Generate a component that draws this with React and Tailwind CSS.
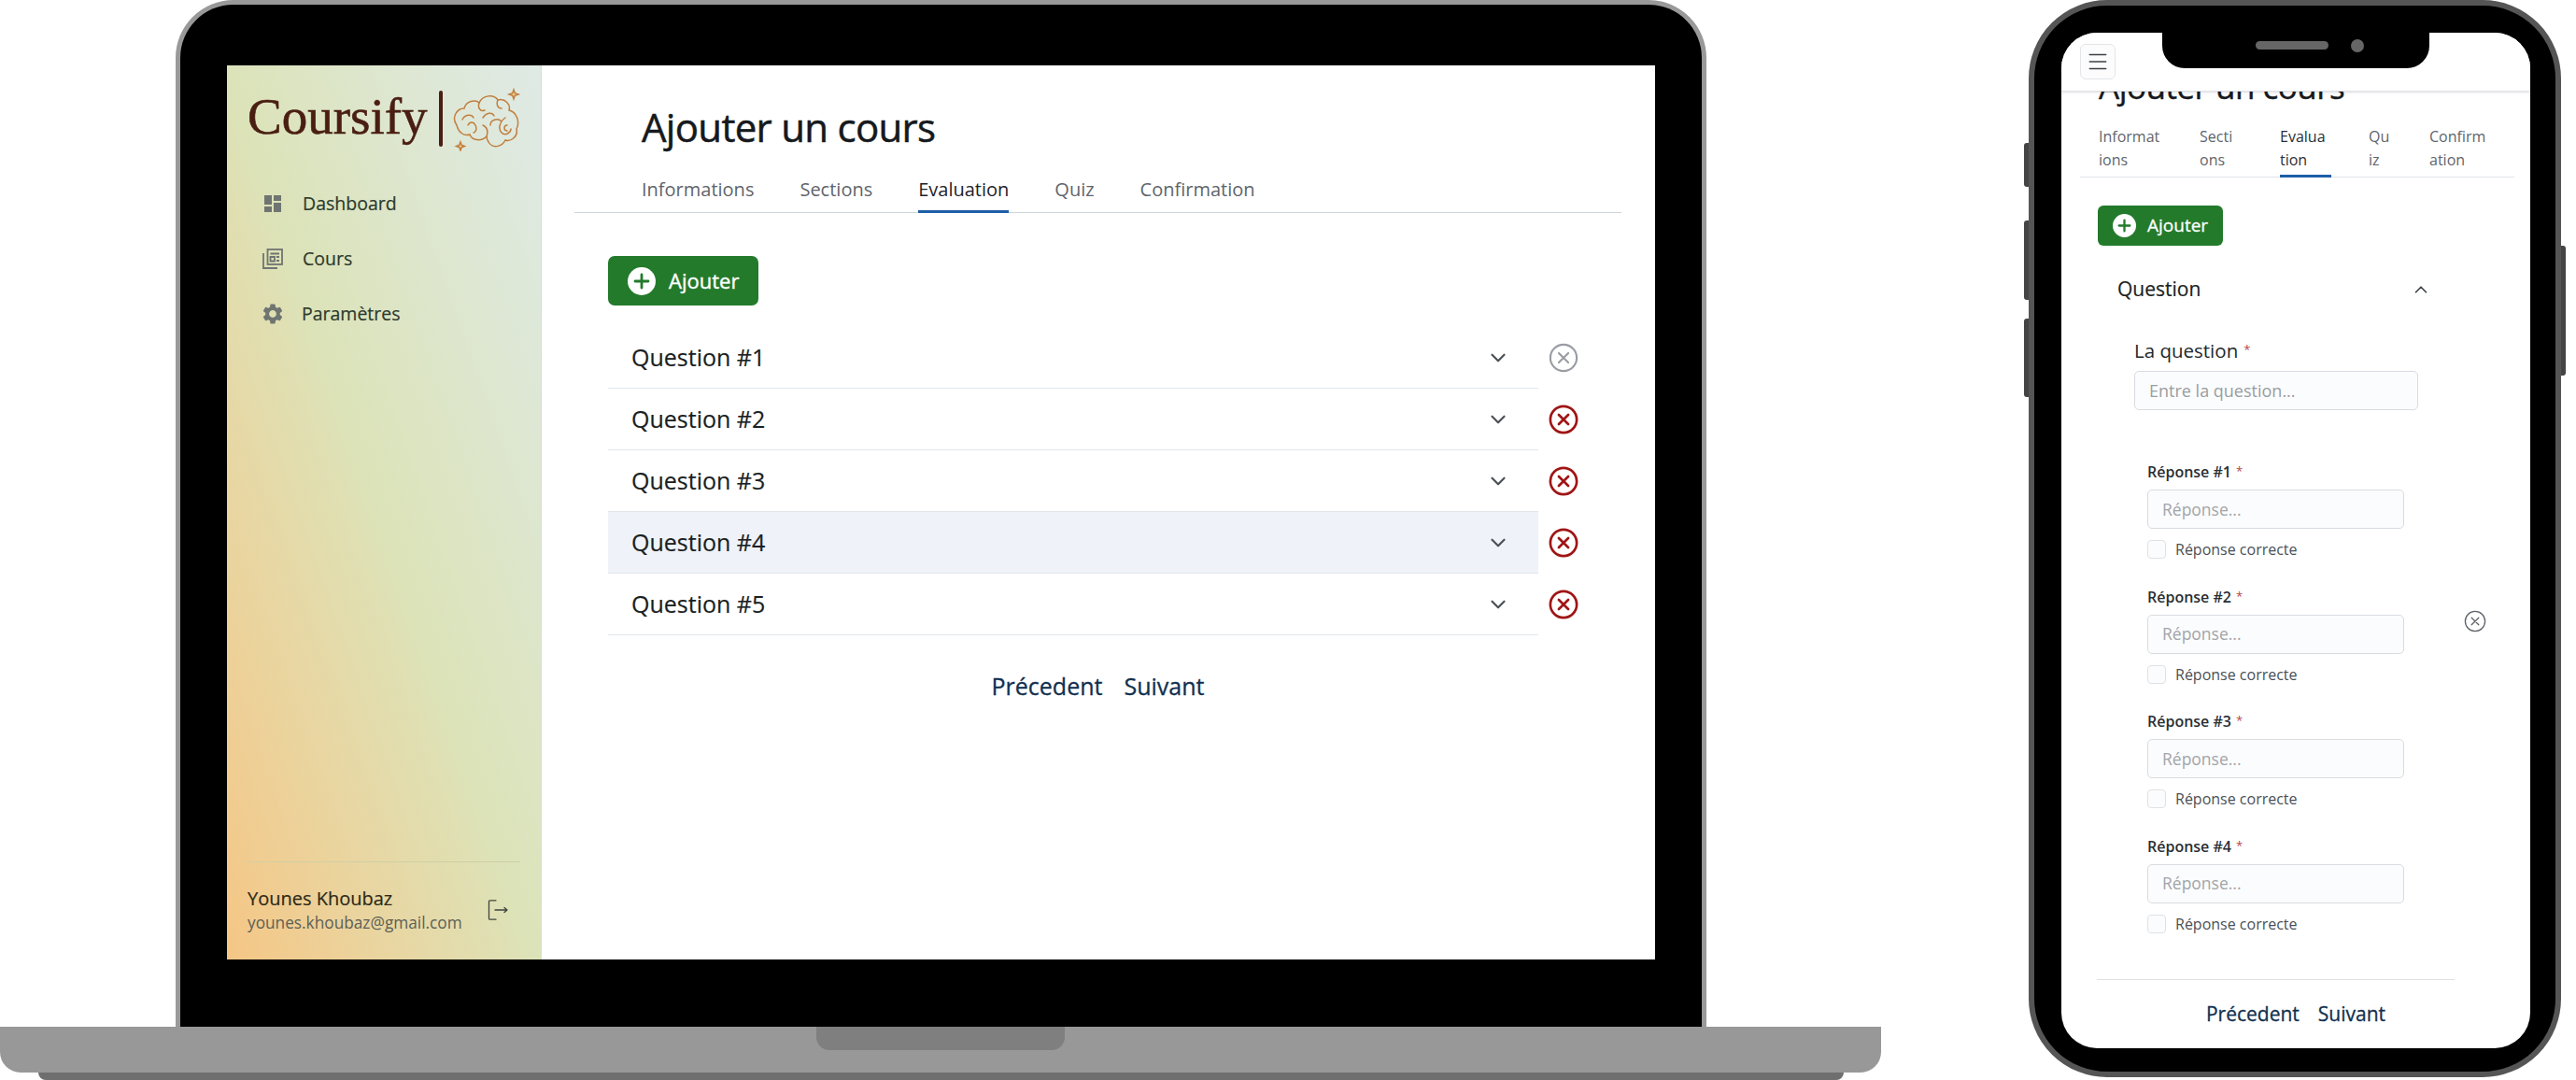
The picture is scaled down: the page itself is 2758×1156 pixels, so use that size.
import { ChevronDown, ChevronUp, Menu } from "lucide-react";
import { MdDashboard, MdSettings } from "react-icons/md";

const questions = [1, 2, 3, 4, 5];
const tabs = ["Informations", "Sections", "Evaluation", "Quiz", "Confirmation"];

const mobileTabs = [
  { lines: ["Informat", "ions"], width: "w-[108px]" },
  { lines: ["Secti", "ons"], width: "w-[86px]" },
  { lines: ["Evalua", "tion"], width: "w-[95px]", active: true },
  { lines: ["Qu", "iz"], width: "w-[65px]" },
  { lines: ["Confirm", "ation"], width: "w-[70px]" },
];

function CircleCross({ className, strokeWidth = 2 }) {
  return (
    <svg viewBox="0 0 24 24" fill="none" stroke="currentColor" strokeWidth={strokeWidth} strokeLinecap="round" className={className}>
      <circle cx="12" cy="12" r="10.6" />
      <path d="M8.2 8.2l7.6 7.6M15.8 8.2l-7.6 7.6" />
    </svg>
  );
}

function PlusBadge({ className }) {
  return (
    <svg viewBox="0 0 30 30" className={className}>
      <circle cx="15" cy="15" r="15" fill="#fff" />
      <path d="M15 8v14M8 15h14" stroke="#237a2b" strokeWidth="2.8" strokeLinecap="round" />
    </svg>
  );
}

function BrainLogo() {
  return (
    <svg viewBox="0 0 80 70" fill="none" stroke="#c07f3f" strokeWidth="1.5" strokeLinecap="round" className="w-[80px] h-[70px] ml-[7px] shrink-0">
      <path d="M8 42C2 34 8 24 16 24C18 16 28 14 32 18C36 9 48 9 52 15C60 13 66 20 64 26C72 28 76 38 72 46C74 54 66 60 60 58C56 66 46 67 42 60C40 57 40 55 40 54C34 60 24 58 22 52C16 54 10 50 8 42Z" />
      <path d="M14 36C17 30 24 30 26 34M20 42C22 38 26 38 28 42C30 46 28 50 26 50M32 18C30 24 34 28 38 26M36 34C40 28 46 28 48 32M52 15C50 20 52 24 56 24M44 42C44 36 52 34 56 38M60 34C54 38 52 46 56 50C60 54 66 50 66 46M62 42C58 42 58 48 62 48M40 54C42 48 40 44 36 42" />
      <path d="M69 4l1.3 3.7L74 9l-3.7 1.3L69 14l-1.3-3.7L64 9l3.7-1.3zM12 60l1.2 3.2 3.3 1.3-3.3 1.2L12 69l-1.2-3.3-3.3-1.2 3.3-1.3z" fill="#f0c98c" />
    </svg>
  );
}

function CoursesIcon({ className }) {
  return (
    <svg viewBox="0 0 22 22" fill="none" stroke="#6f7570" strokeWidth="1.8" className={className}>
      <rect x="5.5" y="1" width="15.5" height="16" />
      <path d="M1 5v16h15" />
      <path d="M8.5 5.5h9.5M8.5 9h4.5v4.5H8.5zM15 9h3M15 13h3" />
    </svg>
  );
}

function LogoutIcon({ className }) {
  return (
    <svg viewBox="0 0 22 22" fill="none" stroke="#3f463c" strokeWidth="1.3" strokeLinecap="round" strokeLinejoin="round" className={className}>
      <path d="M9 .8H2.5a1 1 0 0 0-1 1v18.4a1 1 0 0 0 1 1H9" />
      <path d="M8 11h13M18 8.5l3 2.5-3 2.5" />
    </svg>
  );
}

function Sidebar() {
  return (
    <aside className="w-[337px] h-full flex flex-col bg-linear-to-tr from-[#f5c685] via-[#dce3b9] to-[#dfeae6] border-r border-[#d5dfd8]">
      <div className="flex items-center pl-[22px] pt-[22px] h-[92px]">
        <span className="font-['Liberation_Serif',serif] text-[55px] leading-none mb-[6px] text-[#4a1e12] [-webkit-text-stroke:0.6px_#4a1e12]">Coursify</span>
        <span className="w-[4px] h-[60px] bg-[#4a1e12] rounded-sm ml-[12px]"></span>
        <BrainLogo />
      </div>
      <nav className="pl-[38px] pt-[36px] flex flex-col gap-[19px]">
        <div className="h-[40px] flex items-center gap-[20px] text-[19.5px] text-[#2c3a2c] [-webkit-text-stroke:0.2px_#2c3a2c]">
          <MdDashboard className="w-[24px] h-[24px] -ml-[1px] text-[#6f7570]" />
          <span>Dashboard</span>
        </div>
        <div className="h-[40px] flex items-center gap-[21px] text-[19.5px] text-[#2c3a2c] [-webkit-text-stroke:0.2px_#2c3a2c]">
          <CoursesIcon className="w-[22px] h-[22px]" />
          <span>Cours</span>
        </div>
        <div className="h-[40px] flex items-center gap-[18px] text-[19.5px] text-[#2c3a2c] [-webkit-text-stroke:0.2px_#2c3a2c]">
          <MdSettings className="w-[26px] h-[26px] -ml-[2px] text-[#6f7570]" />
          <span>Paramètres</span>
        </div>
      </nav>
      <div className="mt-auto mx-[22px] border-t border-[#cfcfa5] h-[105px] flex items-center justify-between">
        <div>
          <div className="text-[20px] leading-[26px] text-[#2d2a18] [-webkit-text-stroke:0.2px_#2d2a18]">Younes Khoubaz</div>
          <div className="text-[17.25px] leading-[26px] text-[#5d6055]">younes.khoubaz@gmail.com</div>
        </div>
        <LogoutIcon className="w-[22px] h-[22px] mr-[13px] mt-[-2px]" />
      </div>
    </aside>
  );
}

function DesktopMain() {
  return (
    <main className="flex-1 bg-white pl-[35px] pr-[36px] pt-[35px]">
      <h1 className="pl-[72px] h-[60px] flex items-center text-[42px] tracking-[-0.7px] text-[#16191d] [-webkit-text-stroke:0.5px_#16191d]">Ajouter un cours</h1>
      <div className="mt-[15px] pl-[72px] flex gap-[49px] border-b border-[#cdd6db]">
        {tabs.map((t) => (
          <div
            key={t}
            className={`h-[48px] flex items-center text-[20px] -mb-px border-b-[3px] ${
              t === "Evaluation" ? "border-[#1d5fa8] text-[#1f2429]" : "border-transparent text-[#5f656b]"
            }`}
          >
            {t}
          </div>
        ))}
      </div>
      <div className="pl-[36px]">
        <button className="mt-[46px] w-[161px] h-[53px] rounded-[7px] bg-[#237a2b] flex items-center pl-[21px] gap-[14px] text-white text-[22px] [-webkit-text-stroke:0.4px_#ffffff]">
          <PlusBadge className="w-[30px] h-[30px]" />
          Ajouter
        </button>
        <div className="mt-[23px]">
          {questions.map((n) => (
            <div key={n} className="flex items-center">
              <div className={`w-[996px] h-[66px] border-b border-[#e2e6e9] flex items-center justify-between pl-[25px] pr-[30px] ${n === 4 ? "bg-[#eff2f8]" : ""}`}>
                <span className="text-[25px] text-[#1b1f23] [-webkit-text-stroke:0.2px_#1b1f23]">Question #{n}</span>
                <ChevronDown className="w-[26px] h-[26px] text-[#4a5056]" strokeWidth={2} />
              </div>
              <CircleCross className={`ml-[11px] w-[32px] h-[32px] ${n === 1 ? "text-[#9a9da3]" : "text-[#a01515]"}`} strokeWidth={n === 1 ? 1.6 : 2} />
            </div>
          ))}
        </div>
      </div>
      <div className="mt-[35px] h-[40px] flex items-center justify-center gap-[23px] text-[25px] text-[#12304f] [-webkit-text-stroke:0.3px_#12304f]">
        <span>Précedent</span>
        <span>Suivant</span>
      </div>
    </main>
  );
}

function Laptop() {
  return (
    <div className="w-[2014px] shrink-0 flex flex-col">
      <div className="ml-[188px] w-[1639px] h-[1099px] rounded-t-[62px] border-[5px] border-b-0 border-[#999999] bg-black pt-[65px] pl-[50px] pr-[50px]">
        <div className="w-full h-[957px] flex">
          <Sidebar />
          <DesktopMain />
        </div>
      </div>
      <div className="h-[49px] bg-[#989898] rounded-b-[22px] flex justify-center">
        <div className="w-[266px] h-[25px] bg-[#7f7f7f] rounded-b-[14px]"></div>
      </div>
      <div className="ml-[41px] w-[1933px] h-[8px] bg-[#6f6f6f] rounded-b-[8px]"></div>
    </div>
  );
}

function AnswerGroup({ n }) {
  return (
    <div className="h-[133.5px]">
      <div className="h-[20px] flex items-center text-[16px] font-semibold text-[#2a2e33]">
        Réponse #{n}
        <span className="ml-[5px] text-[13px] font-normal text-[#b5444a]">*</span>
      </div>
      <div className="mt-[9px] w-[275px] h-[42px] rounded-[5px] border border-[#d8dce0] bg-[#fbfcfd] flex items-center pl-[15px] text-[17.5px] text-[#a2a5a9]">
        Réponse...
      </div>
      <div className="mt-[10px] flex items-center gap-[10px]">
        <span className="w-[20px] h-[20px] rounded-[4px] border border-[#dfe2e5] bg-[#fbfcfd]"></span>
        <span className="text-[16px] text-[#4b5055]">Réponse correcte</span>
      </div>
    </div>
  );
}

function PhoneScreen() {
  return (
    <div className="relative w-[502px] h-[1087px] bg-white rounded-[38px] overflow-hidden">
      <div className="absolute top-0 left-0 right-0 h-[63px] bg-white border-b border-[#e2e5e9] shadow-sm">
        <div className="absolute left-[20px] top-[12px] w-[38px] h-[38px] rounded-[6px] border border-[#e3e5e8] bg-[#fcfcfd] flex items-center justify-center">
          <Menu className="w-[26px] h-[26px] text-[#3c4146]" strokeWidth={1.4} />
        </div>
      </div>
      <div className="absolute top-0 left-[108px] w-[286px] h-[38px] bg-black rounded-b-[24px]">
        <span className="absolute left-[100px] top-[9px] w-[78px] h-[9px] rounded-full bg-[#666666]"></span>
        <span className="absolute left-[202px] top-[7px] w-[14px] h-[14px] rounded-full bg-[#666666]"></span>
      </div>

      <div className="pt-[36px]">
        <h1 className="pl-[40px] h-[44px] flex items-center text-[35px] tracking-[-0.5px] text-[#16191d] [-webkit-text-stroke:0.4px_#16191d]">Ajouter un cours</h1>
        <div className="mt-[19px] ml-[20px] w-[465px] pl-[20px] flex border-b border-[#dfe4e8] h-[56px]">
          {mobileTabs.map((t) => (
            <div key={t.lines[0]} className={t.width}>
              <div className={`inline-block h-[56px] text-[16px] leading-[25px] ${t.active ? "border-b-[3px] border-[#1d5fa8] text-[#2a2f34] pr-[6px]" : "text-[#5f656b]"}`}>
                {t.lines[0]}
                <br />
                {t.lines[1]}
              </div>
            </div>
          ))}
        </div>
        <button className="mt-[30px] ml-[39px] w-[134px] h-[43px] rounded-[6px] bg-[#237a2b] flex items-center pl-[16px] gap-[12px] text-white text-[19px] [-webkit-text-stroke:0.3px_#ffffff]">
          <PlusBadge className="w-[25px] h-[25px]" />
          Ajouter
        </button>
        <div className="mt-[27px] ml-[60px] w-[336px] h-[40px] flex items-center justify-between">
          <span className="text-[21px] text-[#1b1f23] [-webkit-text-stroke:0.2px_#1b1f23]">Question</span>
          <ChevronUp className="w-[22px] h-[22px] text-[#3c4146]" strokeWidth={1.8} />
        </div>
        <div className="ml-[78px]">
          <div className="mt-[32px] h-[26px] flex items-center text-[20.5px] text-[#24282c]">
            La question
            <span className="ml-[6px] text-[13px] text-[#b5444a]">*</span>
          </div>
          <div className="mt-[9px] w-[304px] h-[42px] rounded-[5px] border border-[#d8dce0] bg-[#fbfcfd] flex items-center pl-[15px] text-[18px] text-[#9a9da1]">
            Entre la question...
          </div>
        </div>
        <div className="mt-[56px] ml-[92px] flex items-start">
          <div className="w-[275px]">
            {[1, 2, 3, 4].map((n) => (
              <AnswerGroup key={n} n={n} />
            ))}
          </div>
          <CircleCross className="mt-[158px] ml-[64px] w-[24px] h-[24px] text-[#5d6268]" strokeWidth={1.3} />
        </div>
        <div className="mt-[19px] ml-[38px] w-[383px] border-t border-[#dfe2e5]"></div>
        <div className="mt-[22px] h-[30px] flex items-center justify-center gap-[20px] text-[21px] text-[#12304f] [-webkit-text-stroke:0.3px_#12304f]">
          <span>Précedent</span>
          <span>Suivant</span>
        </div>
      </div>
    </div>
  );
}

function Phone() {
  return (
    <div className="relative ml-[158px] w-[570px] h-[1153px] shrink-0">
      <span className="absolute -left-[5px] top-[153px] w-[6px] h-[47px] bg-[#444444] rounded-l-[3px]"></span>
      <span className="absolute -left-[5px] top-[236px] w-[6px] h-[85px] bg-[#444444] rounded-l-[3px]"></span>
      <span className="absolute -left-[5px] top-[341px] w-[6px] h-[84px] bg-[#444444] rounded-l-[3px]"></span>
      <span className="absolute -right-[5px] top-[263px] w-[6px] h-[139px] bg-[#444444] rounded-r-[3px]"></span>
      <div className="relative w-full h-full rounded-[84px] border-[6px] border-[#555555] bg-black pt-[29px] pl-[29px]">
        <PhoneScreen />
      </div>
    </div>
  );
}

export default function App() {
  return (
    <div className="w-[2758px] h-[1156px] overflow-hidden bg-white flex items-start font-['Open_Sans',sans-serif]">
      <Laptop />
      <Phone />
    </div>
  );
}
